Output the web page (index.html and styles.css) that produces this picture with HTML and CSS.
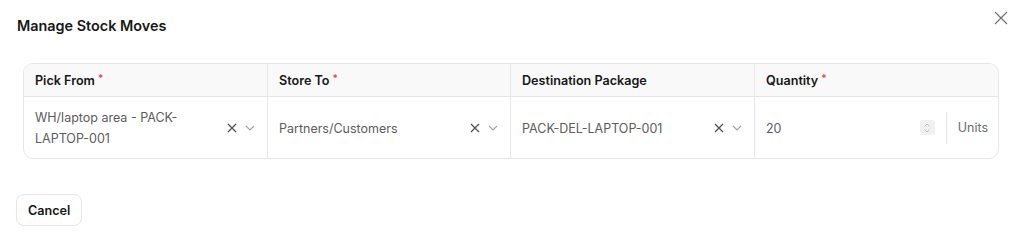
FILE: index.html
```html
<!DOCTYPE html>
<html>
<head>
<meta charset="utf-8">
<link rel="stylesheet" href="styles.css">
</head>
<body>
<div class="dialog">
  <div class="dialog-header">
    <h2 class="title">Manage Stock Moves</h2>
    <button class="close" aria-label="Close">
      <svg width="14" height="14" viewBox="0 0 14 14"><path d="M1 1L13 13M13 1L1 13" stroke="#71717a" stroke-width="1.2" fill="none"/></svg>
    </button>
  </div>
  <div class="table">
    <div class="row head">
      <div class="cell">Pick From <span class="req">*</span></div>
      <div class="cell">Store To <span class="req">*</span></div>
      <div class="cell">Destination Package</div>
      <div class="cell">Quantity <span class="req">*</span></div>
    </div>
    <div class="row body">
      <div class="cell select">
        <span class="value">WH/laptop area - PACK-<br>LAPTOP-001</span>
        <span class="icons">
          <svg class="x" width="10" height="10" viewBox="0 0 10 10"><path d="M1 1L9 9M9 1L1 9" stroke="#52525b" stroke-width="1.3" fill="none"/></svg>
          <svg class="chev" width="10" height="10" viewBox="0 0 10 10"><path d="M1 3L5 7L9 3" stroke="#a1a1aa" stroke-width="1.1" fill="none"/></svg>
        </span>
      </div>
      <div class="cell select">
        <span class="value">Partners/Customers</span>
        <span class="icons">
          <svg class="x" width="10" height="10" viewBox="0 0 10 10"><path d="M1 1L9 9M9 1L1 9" stroke="#52525b" stroke-width="1.3" fill="none"/></svg>
          <svg class="chev" width="10" height="10" viewBox="0 0 10 10"><path d="M1 3L5 7L9 3" stroke="#a1a1aa" stroke-width="1.1" fill="none"/></svg>
        </span>
      </div>
      <div class="cell select">
        <span class="value">PACK-DEL-LAPTOP-001</span>
        <span class="icons">
          <svg class="x" width="10" height="10" viewBox="0 0 10 10"><path d="M1 1L9 9M9 1L1 9" stroke="#52525b" stroke-width="1.3" fill="none"/></svg>
          <svg class="chev" width="10" height="10" viewBox="0 0 10 10"><path d="M1 3L5 7L9 3" stroke="#a1a1aa" stroke-width="1.1" fill="none"/></svg>
        </span>
      </div>
      <div class="cell qty">
        <span class="value">20</span>
        <span class="spin">
          <svg width="8" height="12" viewBox="0 0 8 12"><path d="M1.5 4.5L4 2L6.5 4.5M1.5 7.5L4 10L6.5 7.5" stroke="#b4b4bb" stroke-width="0.9" fill="none"/></svg>
        </span>
        <span class="divider"></span>
        <span class="unit">Units</span>
      </div>
    </div>
  </div>
  <div class="footer">
    <button class="btn">Cancel</button>
  </div>
</div>
</body>
</html>
```
FILE: styles.css
```css
* { box-sizing: border-box; }
html, body {
  margin: 0;
  background: #ffffff;
  font-family: Inter, "Noto Sans", sans-serif;
  color: #171717;
}
.dialog {
  width: 1020px;
  height: 241px;
  padding: 12px 16px 15px 16px;
  display: flex;
  flex-direction: column;
}
.dialog-header {
  display: flex;
  justify-content: space-between;
  align-items: flex-start;
  height: 51px;
}
.title {
  margin: 4px 0 0 1px;
  font-size: 14.4px;
  font-weight: 600;
  line-height: 20px;
}
.close {
  border: 0;
  background: none;
  padding: 0;
  margin: -1px -4px 0 0;
  width: 14px;
  height: 14px;
  display: flex;
}
.table {
  margin: 0 5px 0 7px;
  border: 1px solid #e6e6e6;
  border-radius: 10px;
  overflow: hidden;
}
.row {
  display: grid;
  grid-template-columns: 243px 243px 244px 1fr;
}
.row.head {
  background: #f9f9f9;
  height: 33px;
  border-bottom: 1px solid #e6e6e6;
}
.row.body {
  height: 61px;
}
.cell {
  padding: 0 11px 0 11px;
  border-left: 1px solid #e6e6e6;
  display: flex;
  align-items: center;
  font-size: 12.5px;
}
.cell:first-child { border-left: 0; }
.head .cell {
  font-weight: 600;
  font-size: 12.6px;
  color: #171717;
}
.req {
  color: #ef4444;
  font-size: 10px;
  margin-left: 3px;
  align-self: flex-start;
  margin-top: 8px;
}
.select .value, .qty .value {
  flex: 1;
  color: #5c5c5c;
  line-height: 21px;
  padding-top: 1px;
}
.icons {
  display: flex;
  align-items: center;
  gap: 8px;
  margin-right: 1px;
}
.qty { padding-right: 10px; }
.spin {
  width: 15px;
  height: 15px;
  background: #f1f1f2;
  border-radius: 2px;
  display: flex;
  align-items: center;
  justify-content: center;
  margin-right: 11px;
}
.divider {
  width: 1px;
  height: 32px;
  background: #e6e6e6;
  margin-right: 11px;
}
.unit {
  color: #6b6b74;
}
.footer {
  margin-top: auto;
}
.btn {
  font-family: Inter, "Noto Sans", sans-serif;
  font-size: 12.6px;
  font-weight: 600;
  color: #171717;
  background: #fff;
  border: 1px solid #e6e6e6;
  border-radius: 8px;
  height: 32px;
  padding: 0 11px;
}
```
